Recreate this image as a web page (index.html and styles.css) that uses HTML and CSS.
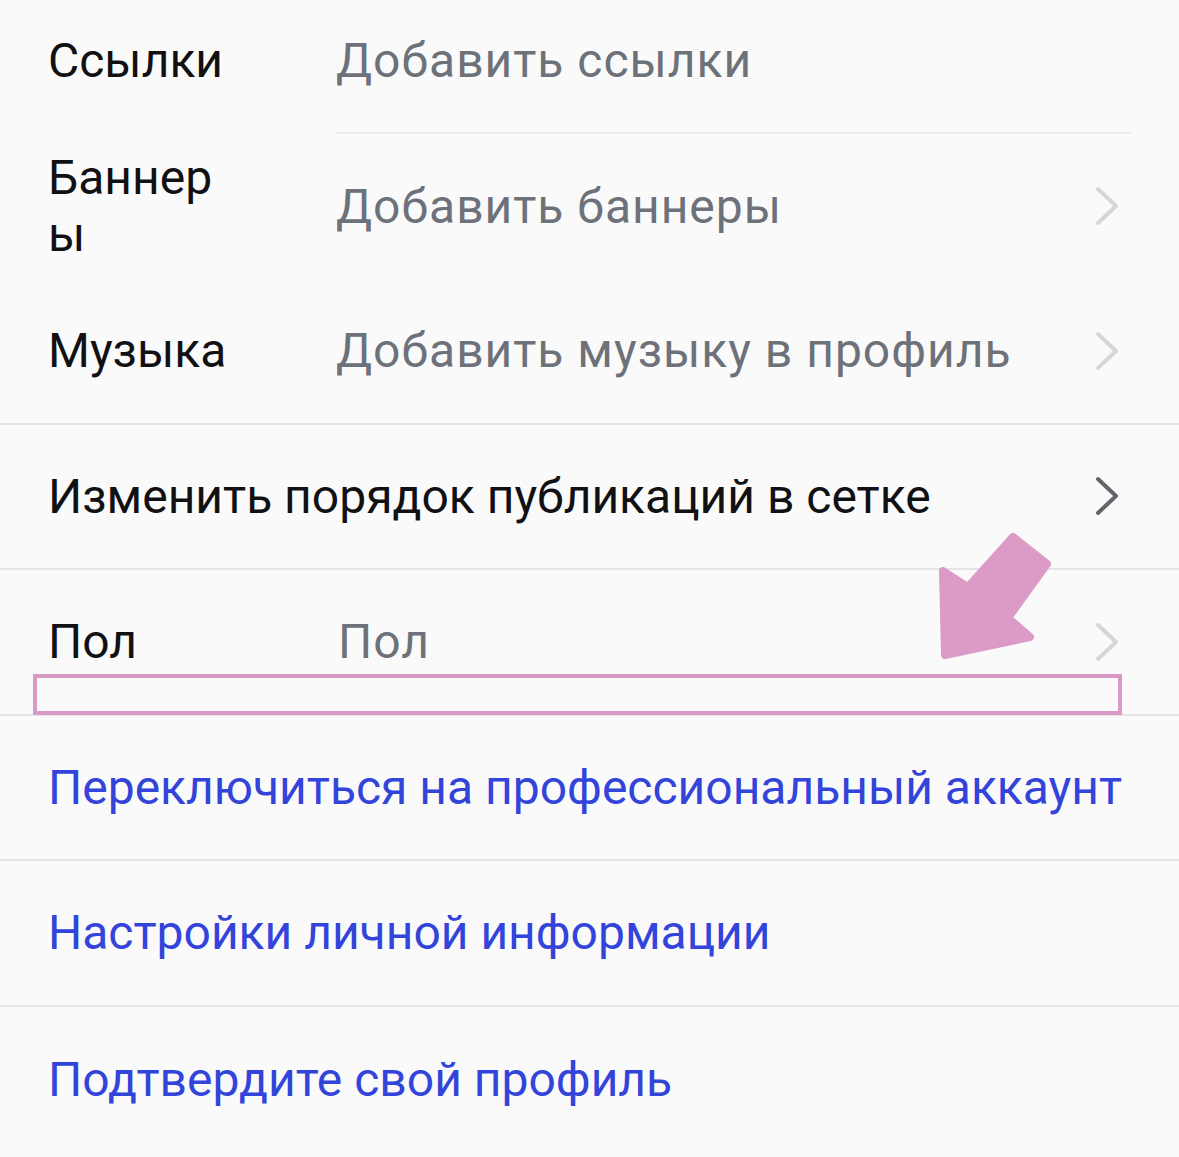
FILE: index.html
```html
<!DOCTYPE html>
<html>
<head lang="ru">
    <meta charset="UTF-8">
    <title>Редактировать профиль</title>
    <link rel="stylesheet" href="styles.css">
</head>
<body>
<div class="container">

    <div class="group">
        <div class="row inset">
            <span class="label">Ссылки</span>
            <span class="value">Добавить ссылки</span>
        </div>
        <div class="row plain">
            <span class="label">Баннеры</span>
            <span class="value">Добавить баннеры</span>
            <svg class="chevron light" viewBox="0 0 24 40"><path d="M3 3 L21 20 L3 37"/></svg>
        </div>
        <div class="row">
            <span class="label">Музыка</span>
            <span class="value">Добавить музыку в профиль</span>
            <svg class="chevron light" viewBox="0 0 24 40"><path d="M3 3 L21 20 L3 37"/></svg>
        </div>
    </div>

    <div class="row">
        <span class="title">Изменить порядок публикаций в сетке</span>
        <svg class="chevron" viewBox="0 0 24 40"><path d="M3 3 L21 20 L3 37"/></svg>
    </div>

    <div class="row gender">
        <span class="label">Пол</span>
        <span class="value">Пол</span>
        <svg class="chevron light" viewBox="0 0 24 40"><path d="M3 3 L21 20 L3 37"/></svg>
        <div class="mark"></div>
    </div>

    <div class="row">
        <span class="link">Переключиться на профессиональный аккаунт</span>
    </div>
    <div class="row">
        <span class="link">Настройки личной информации</span>
    </div>
    <div class="row plain">
        <span class="link">Подтвердите свой профиль</span>
    </div>

    <!-- стрелка-пометка -->
    <svg class="pointer" viewBox="0 0 1179 1157">
        <polygon points="1013,537 1047,564 1008,618 1030,637 945,655 943,571 968,587"/>
    </svg>
</div>
</body>
</html>
```

FILE: styles.css
```css
html, body {
    padding: 0;
    margin: 0;
    background: #fafafa;
}

.container {
    position: relative;
    width: 1179px;
    height: 1157px;
    overflow: hidden;
    font-family: Roboto, 'Liberation Sans', sans-serif;
    font-size: 48px;
}

.group {
    margin-top: -12px;
}

.row {
    position: relative;
    display: flex;
    align-items: center;
    box-sizing: border-box;
    height: 145.5px;
    padding: 0 60px 0 48px;
    border-bottom: 2px solid #e5e5e7;
}

.row.plain {
    border-bottom: none;
}

.row.inset {
    border-bottom: none;
}

.row.inset:after {
    content: '';
    position: absolute;
    left: 336px;
    right: 48px;
    bottom: 0;
    height: 2px;
    background: #ececee;
}

.label {
    width: 184px;
    margin-right: 104px;
    color: #111113;
    line-height: 57px;
    word-break: break-all;
}

.value {
    flex: 1;
    color: #6d7179;
    letter-spacing: 1px;
}

.title {
    flex: 1;
    color: #111113;
}

.link {
    color: #3244da;
    white-space: nowrap;
}

.chevron {
    width: 24px;
    height: 40px;
    margin-left: auto;
    fill: none;
    stroke: #64656c;
    stroke-width: 4;
    stroke-linecap: round;
    stroke-linejoin: round;
}

.chevron.light {
    stroke: #d6d6da;
}

.gender .value {
    margin-left: 2px;
}

.mark {
    position: absolute;
    left: 33px;
    top: 104px;
    width: 1089px;
    height: 41px;
    box-sizing: border-box;
    border: 4px solid #d99bc6;
}

.pointer {
    position: absolute;
    left: 0;
    top: 0;
    width: 1179px;
    height: 1157px;
    fill: #dc9ac6;
    stroke: #dc9ac6;
    stroke-width: 8;
    stroke-linejoin: round;
}
```
